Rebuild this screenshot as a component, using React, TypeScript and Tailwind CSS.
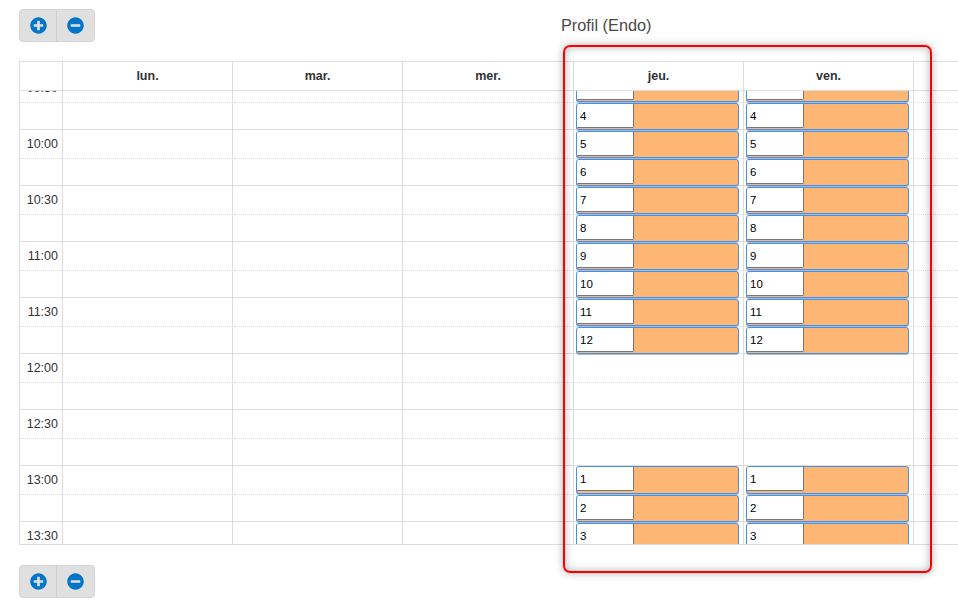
import React from 'react';
import { FaPlusCircle, FaMinusCircle } from 'react-icons/fa';

const gridCols = 'grid grid-cols-[43px_170px_170px_171px_170px_170px_1fr]';
const days = ['lun.', 'mar.', 'mer.', 'jeu.', 'ven.'];
const times = ['09:30', '10:00', '10:30', '11:00', '11:30', '12:00', '12:30', '13:00', '13:30'];

const ZoomButtons = () => (
  <div className="flex h-[33px] w-[76px] rounded border border-[#d4d4d4] bg-[#e0e0e0]">
    <button className="flex w-[37px] items-center justify-center border-r border-[#cfcfcf]">
      <FaPlusCircle className="text-[17px] text-[#0275c7]" />
    </button>
    <button className="flex flex-1 items-center justify-center">
      <FaMinusCircle className="text-[17px] text-[#0275c7]" />
    </button>
  </div>
);

const Cells = ({ label }: { label?: string }) => (
  <>
    <div className="border-r border-[#ddd] pr-[4px] pt-[6px] text-right text-[12.5px] leading-4 text-[#333]">{label}</div>
    <div className="border-r border-[#ddd]" />
    <div className="border-r border-[#ddd]" />
    <div className="border-r border-[#ddd]" />
    <div className="border-r border-[#ddd]" />
    <div className="border-r border-[#ddd]" />
    <div />
  </>
);

const Slot = ({ n, tall }: { n?: number; tall?: boolean }) => (
  <div
    className={`mb-px ml-[2px] flex w-[163px] overflow-hidden rounded-[3px] border border-[#4a90e2] bg-[#fdb673] shadow-[0_1px_0_#9dbde3] ${
      tall ? 'h-[28px]' : 'h-[27px]'
    }`}
  >
    <div className="h-[24px] w-[57px] rounded-br-[2px] border-r border-b border-[#777] bg-white pl-[3px] text-[11.5px] leading-[24px] text-[#000]">
      {n}
    </div>
  </div>
);

const DayEvents = () => (
  <div className="-mt-[91px] flex flex-col pt-[75px]">
    {/* first slot is scrolled almost out of view, its number does not show */}
    <Slot />
    {[4, 5, 6, 7, 8, 9, 10, 11, 12].map((n) => (
      <Slot key={n} n={n} />
    ))}
    <div className="h-[111px]" />
    <Slot n={1} tall />
    <Slot n={2} />
    <Slot n={3} />
  </div>
);

const App = () => {
  return (
    <div className="relative h-[603px] w-[958px] overflow-hidden bg-white pt-[9px] font-['Liberation_Sans',Arial,sans-serif]">
      <div className="ml-[19px] flex items-center">
        <ZoomButtons />
        <div className="ml-[466px] -mt-[1px] text-[16.3px] text-[#4a4a4a]">Profil (Endo)</div>
      </div>

      <div className="ml-[19px] mt-[19px] border-y border-l border-[#ddd]">
        <div className={`${gridCols} h-[29px] border-b border-[#ddd]`}>
          <div className="border-r border-[#ddd]" />
          {days.map((d) => (
            <div key={d} className="border-r border-[#ddd] text-center text-[12.5px] font-bold leading-[28px] text-[#333]">
              {d}
            </div>
          ))}
          <div />
        </div>

        <div className="relative h-[453px] overflow-hidden">
          <div className="-mt-[17px]">
            {times.map((t) => (
              <div key={t}>
                <div className={`${gridCols} h-[29px] border-b border-dotted border-[#ddd]`}>
                  <Cells label={t} />
                </div>
                <div className={`${gridCols} h-[27px] border-b border-[#ddd]`}>
                  <Cells />
                </div>
              </div>
            ))}
          </div>

          <div className={`${gridCols} absolute inset-0`}>
            <div />
            <div />
            <div />
            <div />
            <DayEvents />
            <DayEvents />
            <div />
          </div>
        </div>
      </div>

      <div className="ml-[19px] mt-[20px]">
        <ZoomButtons />
      </div>

      {/* annotation drawn over the screenshot */}
      <div className="pointer-events-none absolute left-[563px] top-[45px] h-[528px] w-[369px] rounded-[7px] border-2 border-[#f00] shadow-[0_0_8px_rgba(0,0,0,0.3),inset_0_0_8px_rgba(0,0,0,0.3)]" />
    </div>
  );
};

export default App;
